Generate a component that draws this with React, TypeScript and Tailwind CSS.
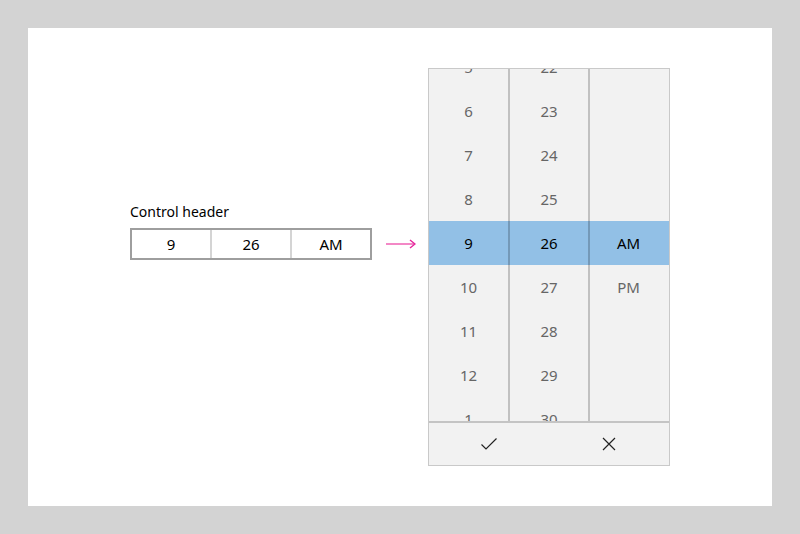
import React from 'react'

const FONT = { fontFamily: '"Noto Sans", "Open Sans", sans-serif' }

type Row = [string, string, string]

// visible rows of the open picker, top one and bottom one are clipped
const ROWS: Row[] = [
    ['5', '22', ''],
    ['6', '23', ''],
    ['7', '24', ''],
    ['8', '25', ''],
    ['9', '26', 'AM'],
    ['10', '27', 'PM'],
    ['11', '28', ''],
    ['12', '29', ''],
    ['1', '30', ''],
]
const SELECTED = 4

function CheckIcon() {
    return (
        <svg width="18" height="18" viewBox="0 0 18 18" fill="none">
            <path d="M1.5 9.5 L6 14 L16.5 3.5" stroke="#222" strokeWidth="1.2" />
        </svg>
    )
}

function CloseIcon() {
    return (
        <svg width="16" height="16" viewBox="0 0 16 16" fill="none">
            <path d="M2 2 L14 14 M14 2 L2 14" stroke="#222" strokeWidth="1.2" />
        </svg>
    )
}

function TimeField() {
    return (
        <div className="mt-[134px] flex flex-col">
            <span className="text-[14px] leading-5 text-black mb-1.5">Control header</span>
            <div className="flex h-8 w-[242px] border-2 border-[#9e9e9e] bg-white text-[15px] text-black">
                <div className="flex-1 flex items-center justify-center">9</div>
                <div className="flex-1 flex items-center justify-center border-l-2 border-[#d4d4d4]">26</div>
                <div className="flex-1 flex items-center justify-center border-l-2 border-[#d4d4d4]">AM</div>
            </div>
        </div>
    )
}

function Arrow() {
    return (
        <div className="mt-[160px] ml-[14px] mr-[12px] h-8 flex items-center">
            <svg width="30" height="10" viewBox="0 0 30 10" fill="none">
                <path d="M0 5 H28" stroke="#f06bb8" strokeWidth="1.6" />
                <path d="M24 1 L29 5 L24 9" stroke="#e5259b" strokeWidth="1.4" />
            </svg>
        </div>
    )
}

function Picker() {
    return (
        <div className="w-[242px] h-[398px] border border-[#c9c9c9] bg-[#f2f2f2] flex flex-col">
            <div className="h-[352px] overflow-hidden">
                <div className="-mt-[24px] flex flex-col">
                    {ROWS.map((row, i) => {
                        const sel = i === SELECTED
                        return (
                            <div
                                key={i}
                                className={
                                    'grid grid-cols-[79px_80px_79px] h-11 text-[15px] ' +
                                    (sel ? 'bg-[#92c0e6] text-black' : 'text-[#666]')
                                }
                            >
                                <div className="flex items-center justify-center">{row[0]}</div>
                                <div className="flex items-center justify-center border-l-2 border-black/20">{row[1]}</div>
                                <div className="flex items-center justify-center border-l-2 border-black/20">{row[2]}</div>
                            </div>
                        )
                    })}
                </div>
            </div>
            <div className="flex-1 flex border-t-2 border-[#c4c4c4]">
                <div className="flex-1 flex items-center justify-center">
                    <CheckIcon />
                </div>
                <div className="flex-1 flex items-center justify-center">
                    <CloseIcon />
                </div>
            </div>
        </div>
    )
}

export default function App() {
    return (
        <div className="w-[800px] h-[534px] bg-[#d3d3d3] p-[28px]" style={FONT}>
            <div className="h-[478px] bg-white flex items-start pl-[102px] pt-[40px]">
                <TimeField />
                <Arrow />
                <Picker />
            </div>
        </div>
    )
}
